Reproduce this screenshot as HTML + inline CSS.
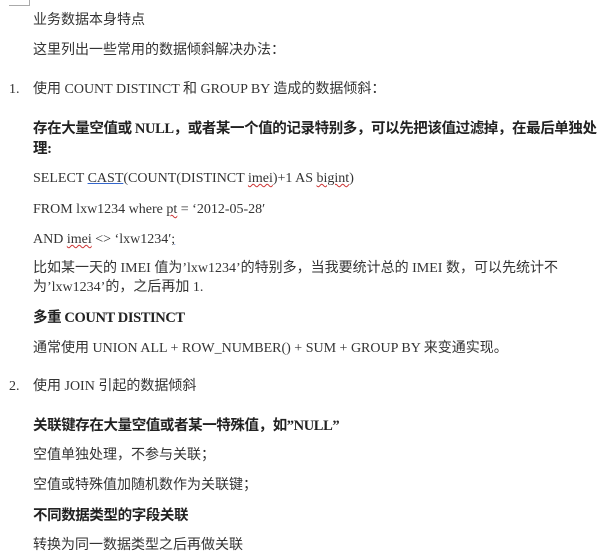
<!DOCTYPE html>
<html><head><meta charset="utf-8"><style>
body{margin:0;width:600px;height:557px;background:#fff;position:relative;overflow:hidden;font-family:"Liberation Serif","Noto Sans CJK SC",serif;color:#333;font-size:14px}
.l{position:absolute;left:33px;white-space:nowrap;line-height:18px;margin-top:3px}
.n{position:absolute;left:9px;line-height:18px;margin-top:3px}
b{font-weight:bold;color:#222}
.b{font-size:14.5px;letter-spacing:-0.4px}
.sq{text-decoration:underline wavy #c33;text-decoration-thickness:1px}
.bu{text-decoration:underline #36c}
</style></head><body>
<div style="position:absolute;left:9px;top:0;width:20px;height:5px;border-right:1px solid #aaa;border-bottom:1px solid #aaa"></div>
<div class="l" style="top:9px">业务数据本身特点</div>
<div class="l" style="top:39px">这里列出一些常用的数据倾斜解决办法：</div>
<div class="n" style="top:78px">1.</div>
<div class="l" style="top:78px">使用 COUNT DISTINCT 和 GROUP BY 造成的数据倾斜：</div>
<div class="l b" style="top:117px"><b>存在大量空值或 NULL，或者某一个值的记录特别多，可以先把该值过滤掉，在最后单独处</b></div>
<div class="l b" style="top:137px"><b>理:</b></div>
<div class="l" style="top:167px">SELECT <span class="bu">CAST</span>(COUNT(DISTINCT <span class="sq">imei</span>)+1 AS <span class="sq">bigint</span>)</div>
<div class="l" style="top:198px">FROM lxw1234 where <span class="sq">pt</span> = ‘2012-05-28′</div>
<div class="l" style="top:228px">AND <span class="sq">imei</span> &lt;&gt; ‘lxw1234′<span class="bu">;</span></div>
<div class="l" style="top:257px">比如某一天的 IMEI 值为’lxw1234’的特别多，当我要统计总的 IMEI 数，可以先统计不</div>
<div class="l" style="top:276px">为’lxw1234’的，之后再加 1.</div>
<div class="l b" style="top:306px"><b>多重 COUNT DISTINCT</b></div>
<div class="l" style="top:337px">通常使用 UNION ALL + ROW_NUMBER() + SUM + GROUP BY 来变通实现。</div>
<div class="n" style="top:375px">2.</div>
<div class="l" style="top:375px">使用 JOIN 引起的数据倾斜</div>
<div class="l b" style="top:414px"><b>关联键存在大量空值或者某一特殊值，如”NULL”</b></div>
<div class="l" style="top:444px">空值单独处理，不参与关联；</div>
<div class="l" style="top:474px">空值或特殊值加随机数作为关联键；</div>
<div class="l b" style="top:504px"><b>不同数据类型的字段关联</b></div>
<div class="l" style="top:534px">转换为同一数据类型之后再做关联</div>
</body></html>
